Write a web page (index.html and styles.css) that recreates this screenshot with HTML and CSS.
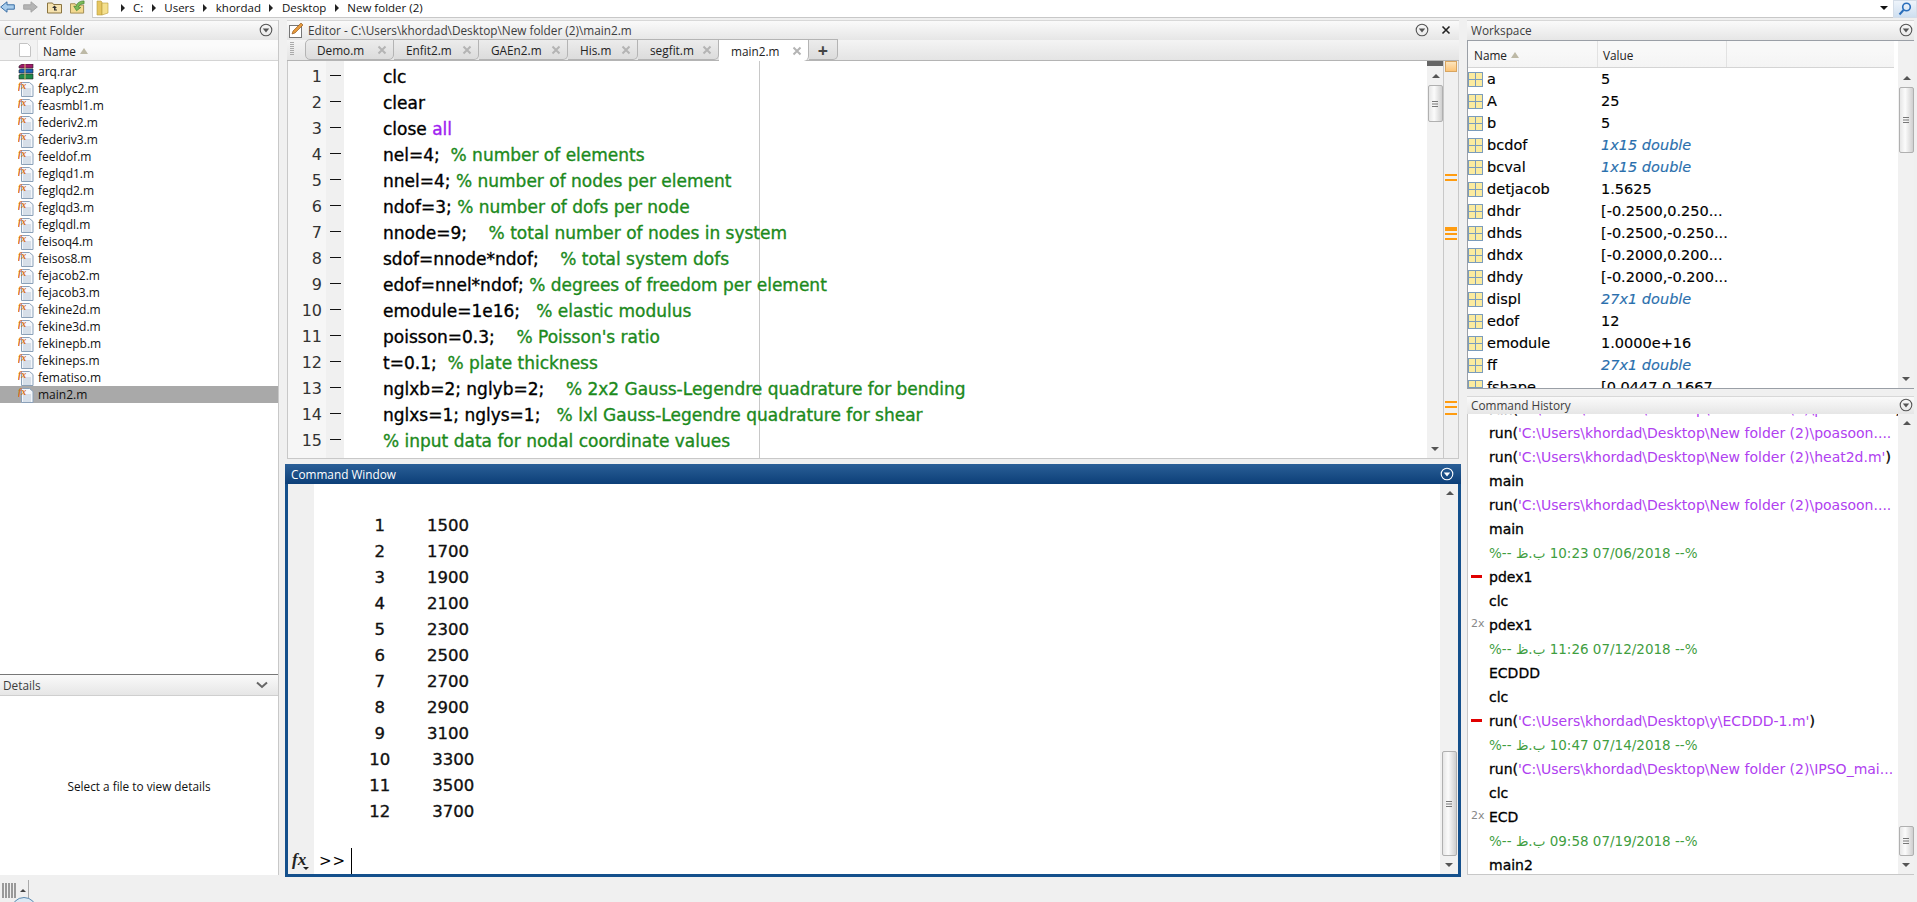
FILE: index.html
```html
<!DOCTYPE html>
<html lang="en">
<head>
<meta charset="utf-8">
<title>MATLAB</title>
<link rel="stylesheet" href="styles.css">
</head>
<body>
<svg class="defs" width="0" height="0">
  <defs>
    <symbol id="fx" viewBox="0 0 16 16">
      <path d="M3.500 1.500h8l3.500 3v11h-11.500z" fill="#f4f7fb" stroke="#8aa0b8"/>
      <path d="M5 8h8M5 10h8M5 12h8M5 14h8" stroke="#b8c6d6"/>
      <text x="0" y="7.500" class="fxt">fx</text>
    </symbol>
    <symbol id="rar" viewBox="0 0 16 16">
      <path d="M1 2l3-2h11v4H1z" fill="#a01a6a" stroke="#222" stroke-width=".6"/>
      <path d="M1 6l2-1h12v4H1z" fill="#1a66b8" stroke="#222" stroke-width=".6"/>
      <path d="M1 11l2-1h12v5H1z" fill="#1f8a4a" stroke="#222" stroke-width=".6"/>
      <path d="M6 0h2v16H6z" fill="#d8c070" opacity=".5"/>
    </symbol>
    <symbol id="var" viewBox="0 0 15 15">
      <rect x=".5" y=".5" width="14" height="14" fill="#fbeb9f" stroke="#7b9cbc"/>
      <path d="M7.500 .5v14M.5 7.500h14" stroke="#7b9cbc"/>
    </symbol>
    <symbol id="menu" viewBox="0 0 14 14">
      <circle cx="7" cy="7" r="5.800" fill="none" stroke="currentColor" stroke-width="1.100"/>
      <path d="M3.800 5.500h6.400L7 9.600z" fill="currentColor"/>
    </symbol>
    <symbol id="close" viewBox="0 0 10 10">
      <path d="M1.500 1.500l7 7M8.500 1.500l-7 7" stroke="#b4b4b4" stroke-width="2"/>
    </symbol>
    <symbol id="grip" viewBox="0 0 8 8">
      <path d="M1 1.500h6M1 4h6M1 6.500h6" stroke="#777" stroke-width="1"/>
    </symbol>
  </defs>
</svg>

<header class="toolbar">
  <div class="nav">
    <svg class="ico16" viewBox="0 0 15 12"><path d="M.7 6L7 .8v3h7.300v4.400H7v3z" fill="#a9cdec" stroke="#3a6ea5"/></svg>
    <svg class="ico16" viewBox="0 0 15 12"><path d="M14.300 6L8 .8v3H.7v4.400H8v3z" fill="#b4b4b4" stroke="#a4a4a4"/></svg>
    <svg class="ico16 up" viewBox="0 0 15 13"><path d="M.5 2.500h5l1 1.500h8v8.500H.5z" fill="#f6e2ae" stroke="#8a7440"/><path d="M7.500 5L5 7.500h2V10h3V9H8.500V7.500H10z" fill="#333"/></svg>
    <svg class="ico16" viewBox="0 0 16 14"><path d="M.5 3.500h5l1 1.500h8v8.500H.5z" fill="#f3d98f" stroke="#a08a50"/><path d="M15 .5C10 .5 7 3 6.500 6.500L4 6l3 5 4.500-3.500L9 7c.5-2 3-3.500 6-3.500z" fill="#7abb58" stroke="#3f7d2c" stroke-width=".7"/></svg>
  </div>
  <div class="address">
    <svg class="folder" viewBox="0 0 14 16"><path d="M1 1h4l1 1v13H1z" fill="#e7c660" stroke="#b79a3e" stroke-width=".6"/><path d="M6 3h6v10l-6 2z" fill="#f5e08e" stroke="#b79a3e" stroke-width=".6"/></svg>
    <span class="sep"></span>
    <span class="crumb">C:</span>
    <span class="sep"></span>
    <span class="crumb">Users</span>
    <span class="sep"></span>
    <span class="crumb">khordad</span>
    <span class="sep"></span>
    <span class="crumb">Desktop</span>
    <span class="sep"></span>
    <span class="crumb">New folder (2)</span>
    <span class="drop"></span>
  </div>
  <div class="search">
    <svg width="14" height="14" viewBox="0 0 14 14"><circle cx="8.500" cy="5" r="3.800" fill="none" stroke="#2a6ebb" stroke-width="1.600"/><path d="M5.500 8l-4 4.500" stroke="#2a6ebb" stroke-width="2"/></svg>
  </div>
</header>

<main class="desktop">
  <section class="col-left">
    <div class="titlebar"><span class="title">Current Folder</span><svg class="menu"><use href="#menu"/></svg></div>
    <div class="colhead folderhead">
      <span class="filecell"><svg width="12" height="14" viewBox="0 0 12 14"><path d="M.5.5h8l3 3v10H.5z" fill="#fff" stroke="#c4c4c4"/></svg></span>
      <span class="namecell">Name <i class="sort"></i></span>
    </div>
    <ul class="files">
      <li><svg class="fi"><use href="#rar"/></svg>arq.rar</li>
      <li><svg class="fi"><use href="#fx"/></svg>feaplyc2.m</li>
      <li><svg class="fi"><use href="#fx"/></svg>feasmbl1.m</li>
      <li><svg class="fi"><use href="#fx"/></svg>federiv2.m</li>
      <li><svg class="fi"><use href="#fx"/></svg>federiv3.m</li>
      <li><svg class="fi"><use href="#fx"/></svg>feeldof.m</li>
      <li><svg class="fi"><use href="#fx"/></svg>feglqd1.m</li>
      <li><svg class="fi"><use href="#fx"/></svg>feglqd2.m</li>
      <li><svg class="fi"><use href="#fx"/></svg>feglqd3.m</li>
      <li><svg class="fi"><use href="#fx"/></svg>feglqdl.m</li>
      <li><svg class="fi"><use href="#fx"/></svg>feisoq4.m</li>
      <li><svg class="fi"><use href="#fx"/></svg>feisos8.m</li>
      <li><svg class="fi"><use href="#fx"/></svg>fejacob2.m</li>
      <li><svg class="fi"><use href="#fx"/></svg>fejacob3.m</li>
      <li><svg class="fi"><use href="#fx"/></svg>fekine2d.m</li>
      <li><svg class="fi"><use href="#fx"/></svg>fekine3d.m</li>
      <li><svg class="fi"><use href="#fx"/></svg>fekinepb.m</li>
      <li><svg class="fi"><use href="#fx"/></svg>fekineps.m</li>
      <li><svg class="fi"><use href="#fx"/></svg>fematiso.m</li>
      <li class="selected"><svg class="fi"><use href="#fx"/></svg>main2.m</li>
    </ul>
    <div class="titlebar details-bar"><span class="title">Details</span><svg class="chev" viewBox="0 0 12 8"><path d="M1 1.500l5 4.500 5-4.500" fill="none" stroke="#666" stroke-width="2"/></svg></div>
    <div class="details-body">Select a file to view details</div>
  </section>

  <section class="col-mid">
    <div class="editor">
      <div class="titlebar edbar">
        <svg class="pencil" viewBox="0 0 16 16"><rect x=".5" y="3.500" width="12" height="12" fill="#fff" stroke="#777"/><path d="M3 12l1-3 8-8 2 2-8 8z" fill="#e59a3c" stroke="#8a4c12" stroke-width=".6"/></svg>
        <span class="title">Editor - C:\Users\khordad\Desktop\New folder (2)\main2.m</span>
        <svg class="menu"><use href="#menu"/></svg>
        <svg class="xclose" viewBox="0 0 10 10"><path d="M1.500 1.500l7 7M8.500 1.500l-7 7" stroke="#222" stroke-width="1.600"/></svg>
      </div>
      <div class="tabs">
        <span class="tabgrip"></span>
        <span class="tab t1">Demo.m<svg class="tx"><use href="#close"/></svg></span>
        <span class="tab t2">Enfit2.m<svg class="tx"><use href="#close"/></svg></span>
        <span class="tab t3">GAEn2.m<svg class="tx"><use href="#close"/></svg></span>
        <span class="tab t4">His.m<svg class="tx"><use href="#close"/></svg></span>
        <span class="tab t5">segfit.m<svg class="tx"><use href="#close"/></svg></span>
        <span class="tab active t6">main2.m<svg class="tx"><use href="#close"/></svg></span>
        <span class="tab plus">+</span>
      </div>
      <div class="codearea">
        <div class="code">
          <div class="ln"><b>1</b><i></i><span>clc</span></div>
          <div class="ln"><b>2</b><i></i><span>clear</span></div>
          <div class="ln"><b>3</b><i></i><span>close <em class="str">all</em></span></div>
          <div class="ln"><b>4</b><i></i><span>nel=4;&nbsp; <em class="cm">% number of elements</em></span></div>
          <div class="ln"><b>5</b><i></i><span>nnel=4; <em class="cm">% number of nodes per element</em></span></div>
          <div class="ln"><b>6</b><i></i><span>ndof=3; <em class="cm">% number of dofs per node</em></span></div>
          <div class="ln"><b>7</b><i></i><span>nnode=9;&nbsp;&nbsp;&nbsp; <em class="cm">% total number of nodes in system</em></span></div>
          <div class="ln"><b>8</b><i></i><span>sdof=nnode*ndof;&nbsp;&nbsp;&nbsp; <em class="cm">% total system dofs</em></span></div>
          <div class="ln"><b>9</b><i></i><span>edof=nnel*ndof; <em class="cm">% degrees of freedom per element</em></span></div>
          <div class="ln"><b>10</b><i></i><span>emodule=1e16;&nbsp;&nbsp; <em class="cm">% elastic modulus</em></span></div>
          <div class="ln"><b>11</b><i></i><span>poisson=0.3;&nbsp;&nbsp;&nbsp; <em class="cm">% Poisson's ratio</em></span></div>
          <div class="ln"><b>12</b><i></i><span>t=0.1;&nbsp; <em class="cm">% plate thickness</em></span></div>
          <div class="ln"><b>13</b><i></i><span>nglxb=2; nglyb=2;&nbsp;&nbsp;&nbsp; <em class="cm">% 2x2 Gauss-Legendre quadrature for bending</em></span></div>
          <div class="ln"><b>14</b><i></i><span>nglxs=1; nglys=1;&nbsp;&nbsp; <em class="cm">% lxl Gauss-Legendre quadrature for shear</em></span></div>
          <div class="ln"><b>15</b><i></i><span><em class="cm">% input data for nodal coordinate values</em></span></div>
        </div>
        <div class="vbar edscroll"><span class="ar up"></span><span class="thumb"><svg class="g"><use href="#grip"/></svg></span><span class="spacer"></span><span class="ar down"></span></div>
        <div class="markers">
          <span class="msq"></span>
          <span class="mk m1"></span>
          <span class="mk m2"></span>
          <span class="mk m3"></span>
        </div>
      </div>
    </div>

    <div class="cmd">
      <div class="cmdbar"><span>Command Window</span><svg class="menu"><use href="#menu"/></svg></div>
      <div class="cmdbody">
        <div class="cmdgutter"><svg class="fxbtn" viewBox="0 0 20 20"><text x="1" y="15" class="fxb">fx</text><path d="M12 17h6l-3 3z" fill="#222"/></svg></div>
        <div class="cmdtext">
          <pre class="output">          1        1500
          2        1700
          3        1900
          4        2100
          5        2300
          6        2500
          7        2700
          8        2900
          9        3100
         10        3300
         11        3500
         12        3700</pre>
          <div class="prompt"><span class="pr">&gt;&gt;</span><i class="caret"></i></div>
        </div>
        <div class="vbar cmdscroll"><span class="ar up"></span><span class="spacer"></span><span class="thumb"><svg class="g"><use href="#grip"/></svg></span><span class="ar down"></span></div>
      </div>
    </div>
  </section>

  <section class="col-right">
    <div class="wsbox">
      <div class="titlebar wsbar"><span class="title">Workspace</span><svg class="menu"><use href="#menu"/></svg></div>
      <div class="wsframe">
        <div class="wstable">
          <div class="colhead wshead">
            <span class="wsn">Name <i class="sort"></i></span>
            <span class="wsv">Value</span>
            <span class="wsx"></span>
          </div>
          <ul class="vars">
            <li><svg class="vi"><use href="#var"/></svg><span class="wsn">a</span><span>5</span></li>
            <li><svg class="vi"><use href="#var"/></svg><span class="wsn">A</span><span>25</span></li>
            <li><svg class="vi"><use href="#var"/></svg><span class="wsn">b</span><span>5</span></li>
            <li><svg class="vi"><use href="#var"/></svg><span class="wsn">bcdof</span><span class="mat">1x15 double</span></li>
            <li><svg class="vi"><use href="#var"/></svg><span class="wsn">bcval</span><span class="mat">1x15 double</span></li>
            <li><svg class="vi"><use href="#var"/></svg><span class="wsn">detjacob</span><span>1.5625</span></li>
            <li><svg class="vi"><use href="#var"/></svg><span class="wsn">dhdr</span><span>[-0.2500,0.250...</span></li>
            <li><svg class="vi"><use href="#var"/></svg><span class="wsn">dhds</span><span>[-0.2500,-0.250...</span></li>
            <li><svg class="vi"><use href="#var"/></svg><span class="wsn">dhdx</span><span>[-0.2000,0.200...</span></li>
            <li><svg class="vi"><use href="#var"/></svg><span class="wsn">dhdy</span><span>[-0.2000,-0.200...</span></li>
            <li><svg class="vi"><use href="#var"/></svg><span class="wsn">displ</span><span class="mat">27x1 double</span></li>
            <li><svg class="vi"><use href="#var"/></svg><span class="wsn">edof</span><span>12</span></li>
            <li><svg class="vi"><use href="#var"/></svg><span class="wsn">emodule</span><span>1.0000e+16</span></li>
            <li><svg class="vi"><use href="#var"/></svg><span class="wsn">ff</span><span class="mat">27x1 double</span></li>
            <li><svg class="vi"><use href="#var"/></svg><span class="wsn">fshape</span><span>[0.0447,0.1667...</span></li>
          </ul>
        </div>
        <div class="vbar wsscroll"><span class="ar up"></span><span class="thumb"><svg class="g"><use href="#grip"/></svg></span><span class="spacer"></span><span class="ar down"></span></div>
      </div>
    </div>

    <div class="histbox">
      <div class="titlebar histbar"><span class="title">Command History</span><svg class="menu"><use href="#menu"/></svg></div>
      <div class="histframe">
        <ul class="hist">
          <li>run(<em class="str">'C:\Users\khordad\Desktop\New folder (2)\poasoon.m'</em>)</li>
          <li>run(<em class="str">'C:\Users\khordad\Desktop\New folder (2)\poasoon....</em></li>
          <li>run(<em class="str">'C:\Users\khordad\Desktop\New folder (2)\heat2d.m'</em>)</li>
          <li>main</li>
          <li>run(<em class="str">'C:\Users\khordad\Desktop\New folder (2)\poasoon....</em></li>
          <li>main</li>
          <li class="cmt">%-- <bdi>ب.ظ</bdi> 10:23 07/06/2018 --%</li>
          <li><i class="err"></i>pdex1</li>
          <li>clc</li>
          <li><i class="cnt">2x</i>pdex1</li>
          <li class="cmt">%-- <bdi>ب.ظ</bdi> 11:26 07/12/2018 --%</li>
          <li>ECDDD</li>
          <li>clc</li>
          <li><i class="err"></i>run(<em class="str">'C:\Users\khordad\Desktop\y\ECDDD-1.m'</em>)</li>
          <li class="cmt">%-- <bdi>ب.ظ</bdi> 10:47 07/14/2018 --%</li>
          <li>run(<em class="str">'C:\Users\khordad\Desktop\New folder (2)\IPSO_mai...</em></li>
          <li>clc</li>
          <li><i class="cnt">2x</i>ECD</li>
          <li class="cmt">%-- <bdi>ب.ظ</bdi> 09:58 07/19/2018 --%</li>
          <li>main2</li>
        </ul>
        <div class="vbar histscroll"><span class="ar up"></span><span class="spacer"></span><span class="thumb"><svg class="g"><use href="#grip"/></svg></span><span class="ar down"></span></div>
      </div>
    </div>
  </section>
</main>

<footer class="status">
  <span class="sgrip"></span><span class="sup"></span><span class="svl"></span>
  <span class="orb"></span>
</footer>
</body>
</html>
```

FILE: styles.css
```css
* { box-sizing: border-box; }
html, body { margin: 0; height: 902px; overflow: hidden; }
body {
  width: 1917px;
  background: #f0f0f0;
  font-family: "Open Sans", "DejaVu Sans", sans-serif;
  font-size: 11.800px;
  color: #000;
  display: flex;
  flex-direction: column;
  position: relative;
}
ul { list-style: none; margin: 0; padding: 0; }
em, i { font-style: normal; }
.defs { position: absolute; }
.fxt { font: italic bold 10px "Liberation Serif", serif; fill: #d8701a; }
.fxb { font: italic bold 17px "Liberation Serif", serif; fill: #222; }

.toolbar { height: 18px; display: flex; background: #f0f0f0; flex: none; }
.nav { width: 92px; display: flex; align-items: flex-start; gap: 8px; flex: none; }
.ico16 { width: 15px; height: 14px; flex: none; }
.up { margin-left: 1px; }
.address { flex: 1; height: 18px; background: #fff; border-bottom: 1px solid #c8c8c8; border-left: 1px solid #d0d0d0; display: flex; align-items: center; font-size: 11.500px; line-height: 16px; padding-bottom: 1px; }
.folder { width: 14px; height: 16px; margin: 0 2px 0 3px; flex: none; }
.crumb { color: #111; white-space: nowrap; }
.sep { flex: none; margin: 0 8.500px; border-left: 4px solid #222; border-top: 4px solid transparent; border-bottom: 4px solid transparent; }
.drop { margin-left: auto; margin-right: 5px; border-top: 4px solid #111; border-left: 4px solid transparent; border-right: 4px solid transparent; }
.search { width: 24px; height: 18px; flex: none; background: linear-gradient(#eef4fb, #cfdff0); border: 1px solid #d4dde8; display: flex; align-items: center; justify-content: center; }

.desktop { height: 857px; margin-top: 2px; display: grid; grid-template-columns: 279px 1176px 450px; column-gap: 6px; flex: none; }
.col-left { display: flex; flex-direction: column; border-right: 1px solid #c8c8c8; background: #fff; height: 855px; }
.col-mid { display: flex; flex-direction: column; width: 1176px; }
.col-right { display: flex; flex-direction: column; padding-right: 3px; }

.titlebar { height: 20px; flex: none; display: flex; align-items: center; background: linear-gradient(#fafafa, #e6e6e6); color: #3d3d3d; padding: 0 0 1px 4px; border-top: 1px solid #d8d8d8; }
.title { flex: 1; white-space: nowrap; }
.menu { width: 14px; height: 14px; color: #555; margin-right: 5px; flex: none; }

.colhead { height: 21px; flex: none; display: flex; align-items: flex-end; background: linear-gradient(#fbfbfb 30%, #f2f2f2); border-bottom: 1px solid #d4d4d4; color: #222; }
.filecell { width: 38px; height: 100%; display: flex; align-items: center; justify-content: flex-end; border-right: 1px solid #e4e4e4; padding-right: 6px; background: #f2f2f2; }
.namecell { padding: 0 0 1px 5px; height: 100%; display: flex; align-items: flex-end; gap: 4px; }
.sort { display: inline-block; margin-bottom: 5px; border-bottom: 6px solid #bdb9a6; border-left: 4px solid transparent; border-right: 4px solid transparent; }

.files { flex: 1; padding-top: 2px; font-size: 12px; }
.files li { height: 17px; display: flex; align-items: center; padding-left: 18px; gap: 4px; white-space: nowrap; line-height: 17px; color: #111; }
.files li.selected { background: #a9a9a9; }
.fi { width: 16px; height: 16px; flex: none; }

.details-bar { height: 22px; border-top: 1px solid #777; border-bottom: 1px solid #cfcfcf; padding: 0 0 0 3px; }
.chev { width: 12px; height: 8px; margin-right: 10px; }
.details-body { height: 179px; display: flex; align-items: center; justify-content: center; color: #111; background: #fff; }

.editor { height: 439px; flex: none; margin: 0 2px 0 2px; display: flex; flex-direction: column; background: #f0f0f0; }
.edbar { padding-left: 2px; }
.pencil { width: 16px; height: 16px; margin-right: 3px; flex: none; }
.xclose { width: 10px; height: 10px; margin: 0 8px 0 7px; flex: none; }
.tabs { height: 21px; flex: none; display: flex; align-items: flex-end; background: linear-gradient(#f4f4f4, #e4e4e4); border-bottom: 1px solid #b4b4b4; padding-left: 3px; }
.tabgrip { width: 4px; height: 14px; margin: 0 11px 4px 0; background: repeating-linear-gradient(#aaa 0 1px, transparent 1px 2px); flex: none; }
.tab { height: 21px; display: flex; align-items: center; justify-content: space-between; padding: 0 6px 0 12px; background: linear-gradient(#ececec, #dcdcdc); border: 1px solid #b4b4b4; border-left: 0; border-radius: 0 0 5px 0; color: #222; flex: none; }
.t1 { width: 89px; border-left: 1px solid #b4b4b4; border-radius: 5px 0 5px 5px; padding-left: 11px; }
.t2 { width: 85px; }
.t3 { width: 89px; }
.t4 { width: 70px; }
.t5 { width: 81px; }
.t6 { width: 90px; }
.tab.active { background: #fff; border-bottom: 0; height: 22px; margin-bottom: -1px; }
.tx { width: 10px; height: 10px; flex: none; }
.plus { width: 29px; padding: 0; justify-content: center; font-size: 18px; font-weight: 700; color: #444; }

.codearea { flex: 1; display: flex; border-left: 1px solid #c8c8c8; border-bottom: 1px solid #c8c8c8; min-height: 0; background: #fff; }
.code { flex: 1; overflow: hidden; padding-top: 3px; font-family: "DejaVu Sans", sans-serif; font-size: 17px; -webkit-text-stroke: .35px; background: linear-gradient(90deg, #f6f6f6 38px, #f0f0f0 38px, #f0f0f0 56px, transparent 56px, transparent 471px, #c8c8c8 471px, #c8c8c8 472px, transparent 472px); min-width: 0; }
.ln { height: 26px; display: flex; align-items: center; line-height: 26px; white-space: nowrap; }
.ln b { width: 34px; flex: none; text-align: right; font-weight: 400; font-size: 16px; color: #333; -webkit-text-stroke: 0; }
.ln i { width: 18px; margin-left: 4px; flex: none; display: flex; align-items: center; justify-content: center; height: 26px; }
.ln i::before { content: ""; width: 11px; height: 1px; background: #111; margin-top: -4px; }
.ln span { margin-left: 39px; }
.cm { color: #1c8a1c; }
.str { color: #a020f0; }

.vbar { width: 16px; flex: none; background: #f1f1f1; display: flex; flex-direction: column; align-items: center; padding-top: 7px; }
.vbar .spacer { flex: 1; }
.ar { flex: none; width: 0; height: 0; border-left: 4px solid transparent; border-right: 4px solid transparent; }
.ar.up { border-bottom: 4px solid #555; margin-bottom: 7px; }
.ar.down { border-top: 4px solid #555; margin: 7px 0; }
.thumb { width: 15px; background: linear-gradient(90deg, #e6e6e6, #fbfbfb 40%, #cfcfcf); border: 1px solid #b0b0b0; border-radius: 2px; flex: none; display: flex; align-items: center; justify-content: center; }
.g { width: 8px; height: 8px; }
.edscroll { border-top: 5px solid #666; padding-top: 8px; }
.edscroll .thumb { height: 37px; }
.markers { width: 16px; flex: none; background: #f0f0f0; border-left: 1px solid #c8c8c8; border-right: 1px solid #c8c8c8; }
.msq { display: block; width: 12px; height: 11px; margin: 0 0 0 1px; background: linear-gradient(#fde5bd, #fcc477); border: 1px solid #d8a560; }
.mk { display: block; width: 12px; margin-left: 1px; height: 7px; border-top: 2px solid #ff9c10; border-bottom: 2px solid #ff9c10; }
.mk::before { content: ""; display: none; height: 2px; background: #ff9c10; }
.m1 { margin-top: 102px; }
.m2 { margin-top: 46px; height: 13px; border-top-width: 4px; }
.m2::before { display: block; margin-top: 2px; }
.m3 { margin-top: 161px; height: 14px; }
.m3::before { display: block; margin-top: 3px; }

.cmd { height: 413px; margin-top: 5px; border: 3px solid #14508c; border-top: 0; display: flex; flex-direction: column; background: #fff; flex: none; }
.cmdbar { height: 20px; flex: none; margin: 0 -3px; background: linear-gradient(#2a5f97, #0c3f78); color: #fff; display: flex; align-items: center; justify-content: space-between; padding-left: 6px; }
.cmdbar .menu { color: #fff; margin-right: 7px; }
.cmdbody { flex: 1; display: flex; min-height: 0; }
.cmdgutter { width: 26px; background: #f0f0f0; flex: none; display: flex; align-items: flex-end; padding-bottom: 4px; }
.fxbtn { width: 20px; height: 20px; margin-left: 3px; }
.cmdtext { flex: 1; display: flex; flex-direction: column; padding: 29px 0 0 5px; min-width: 0; }
.output { margin: 0; padding-left: 3px; font: 16.500px/26px "DejaVu Sans", sans-serif; -webkit-text-stroke: .35px; color: #111; white-space: pre; flex: 1; }
.prompt { height: 26px; display: flex; align-items: center; gap: 5px; font: 15px/26px "DejaVu Sans", sans-serif; }
.pr { letter-spacing: 1px; }
.caret { width: 1px; height: 26px; background: #000; }
.cmdscroll { width: 18px; }
.cmdscroll .thumb { height: 105px; }

.wsbox { height: 369px; flex: none; display: flex; flex-direction: column; }
.wsbar .menu { margin-right: 1px; }
.wsframe { flex: 1; display: flex; border: 1px solid #9a9fa6; border-width: 1px 0 1px 1px; min-height: 0; background: #fff; }
.wstable { flex: 1; min-width: 0; overflow: hidden; }
.wshead { height: 27px; background: linear-gradient(#f8f8f8 40%, #f4f4f4); margin-right: 4px; }
.wshead .wsn { width: 130px; border-right: 1px solid #e2e2e2; height: 100%; display: flex; align-items: flex-end; padding: 0 0 4px 6px; gap: 4px; flex: none; }
.wsv { width: 129px; border-right: 1px solid #e2e2e2; height: 100%; display: flex; align-items: flex-end; padding: 0 0 4px 5px; flex: none; }
.wsx { flex: 1; height: 100%; }
.vars { font-family: "DejaVu Sans", sans-serif; font-size: 14.500px; }
.vars li { height: 22px; display: flex; align-items: center; white-space: nowrap; -webkit-text-stroke: .15px; }
.vi { width: 15px; height: 15px; flex: none; margin-right: 4px; }
.vars .wsn { width: 114px; flex: none; }
.mat { color: #2a6fad; font-style: italic; }
.wsscroll { padding-top: 35px; }
.wsscroll .thumb { height: 66px; }

.histbox { display: flex; flex-direction: column; margin-top: 7px; height: 479px; flex: none; }
.histbar { height: 18px; }
.histbar .menu { margin-right: 1px; }
.histframe { height: 461px; flex: none; display: flex; border-left: 1px solid #c8c8c8; border-bottom: 1px solid #c8c8c8; background: #fff; min-height: 0; }
.hist { flex: 1; overflow: hidden; font-family: "DejaVu Sans", sans-serif; font-size: 14px; min-width: 0; }
.hist li { height: 24px; display: flex; align-items: center; padding-left: 21px; white-space: pre; position: relative; -webkit-text-stroke: .3px; }
.hist li:first-child { margin-top: -17px; }
.hist .str { -webkit-text-stroke: 0; color: #b040f0; }
.hist .cmt { color: #3f9e3f; font-size: 13.500px; -webkit-text-stroke: 0; display: block; line-height: 24px; }
.err { position: absolute; left: 3px; top: 10px; width: 11px; height: 3px; background: #e00000; }
.cnt { position: absolute; left: 3px; top: 4px; font-size: 11px; color: #888; -webkit-text-stroke: 0; }
.histscroll .thumb { height: 30px; }

.status { flex: 1; background: #f0f0f0; position: relative; display: flex; align-items: flex-start; padding: 6px 0 0 2px; overflow: hidden; }
.sgrip { width: 15px; height: 15px; background: repeating-linear-gradient(90deg, #999 0 2px, transparent 2px 3px); }
.sup { margin: 6px 0 0 3px; border-bottom: 3px solid #444; border-left: 3px solid transparent; border-right: 3px solid transparent; height: 0; }
.svl { width: 1px; height: 20px; margin: -3px 0 0 2px; background: #aaa; }
.orb { position: absolute; left: 11px; top: 20px; width: 26px; height: 26px; border-radius: 50%; border: 1px solid #5c8ab0; background: #dbe9f4; }
```
